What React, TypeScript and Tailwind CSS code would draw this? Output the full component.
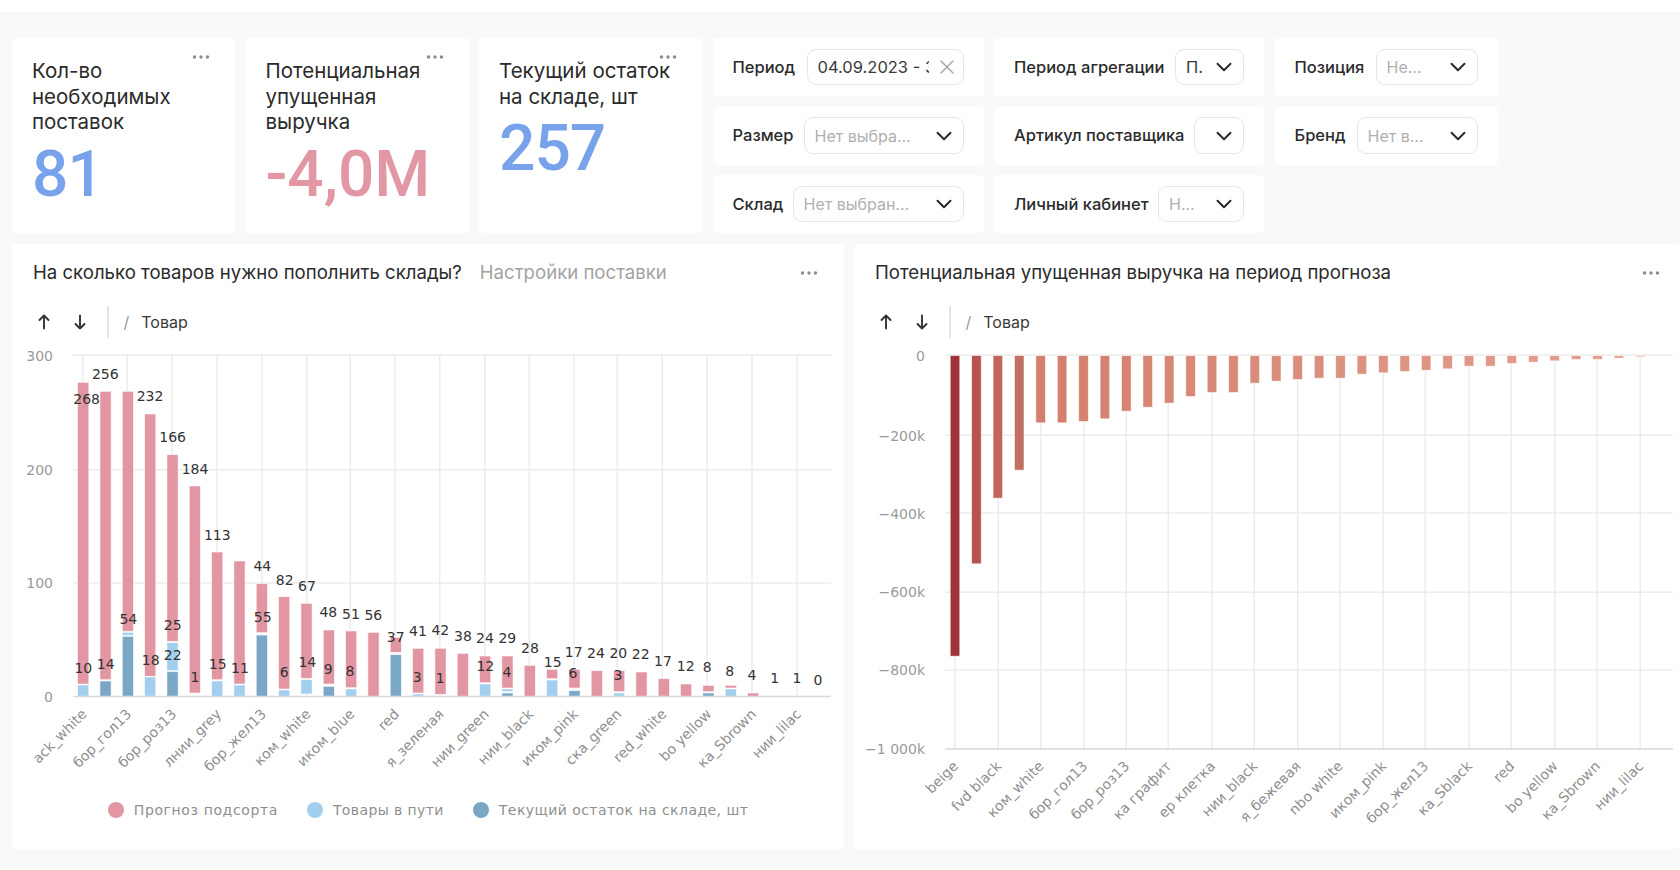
import React from "react";
import { ChevronDown, X } from "lucide-react";

const PINK = "#e295a2";
const LIGHT = "#a3cfee";
const DARK = "#7ba7c7";

// [colour, top, bottom] measured against a baseline, in thirds of a pixel
type Seg = [string, number, number];
const P = PINK, L = LIGHT, D = DARK;
const leftA: Seg[][] = [
  [[P, 130, 1035], [L, 1038, 1072]],
  [[P, 157, 1022], [D, 1026, 1072]],
  [[P, 157, 877], [L, 880, 889], [D, 892, 1072]],
  [[P, 225, 1012], [L, 1014, 1072]],
  [[P, 347, 907], [L, 911, 995], [D, 998, 1072]],
  [[P, 441, 1062]],
  [[P, 639, 1022], [L, 1026, 1072]],
  [[P, 666, 1035], [L, 1038, 1072]],
  [[P, 734, 881], [D, 888, 1072]],
  [[P, 773, 1050], [L, 1053, 1072]],
  [[P, 793, 1018], [L, 1022, 1065]],
  [[P, 873, 1035], [D, 1042, 1072]],
  [[P, 876, 1046], [L, 1050, 1072]],
  [[P, 880, 1072]],
  [[P, 895, 940], [D, 947, 1072]],
  [[P, 928, 1062], [L, 1065, 1072]],
  [[P, 928, 1066]],
];
const leftB: Seg[][] = [
  [[P, 463, 592]],
  [[P, 471, 551], [L, 555, 592]],
  [[P, 471, 567], [L, 570, 578], [D, 582, 592]],
  [[P, 499, 592]],
  [[P, 511, 539], [L, 543, 592]],
  [[P, 511, 567], [D, 575, 592]],
  [[P, 515, 592]],
  [[P, 515, 578], [L, 582, 592]],
  [[P, 519, 592]],
  [[P, 539, 592]],
  [[P, 555, 592]],
  [[P, 559, 578], [D, 582, 592]],
  [[P, 559, 567], [L, 570, 592]],
  [[P, 582, 592]],
];
const leftBars: Seg[][] = [
  ...leftA,
  ...leftB.map((b) => b.map(([c, t, e]) => [c, t + 480, e + 480] as Seg)),
];

const leftLabels: [string, number, number][] = [
  ["268", 260, 178], ["256", 316, 103], ["232", 450, 170], ["166", 518, 292], ["184", 585, 388],
  ["113", 652, 585], ["44", 787, 680], ["82", 854, 720], ["67", 921, 738], ["48", 985, 818],
  ["51", 1053, 822], ["56", 1120, 825], ["37", 1187, 893], ["41", 1254, 873], ["42", 1321, 872],
  ["10", 250, 984], ["14", 317, 972], ["54", 385, 837], ["18", 452, 960], ["25", 518, 857],
  ["22", 518, 945], ["1", 585, 1012], ["15", 653, 972], ["11", 720, 984], ["55", 788, 833],
  ["6", 853, 998], ["14", 922, 968], ["9", 985, 988], ["8", 1050, 995], ["3", 1252, 1012],
  ["1", 1321, 1016],
];
const leftLabelsB: [string, number, number][] = [
  ["38", 129, 408], ["24", 195, 416], ["29", 262, 416], ["28", 330, 444], ["15", 398, 488],
  ["17", 461, 456], ["24", 528, 460], ["20", 595, 460], ["22", 662, 464], ["17", 729, 484],
  ["12", 797, 500], ["8", 862, 503], ["8", 929, 515], ["4", 996, 527], ["1", 1064, 535],
  ["1", 1131, 535], ["0", 1194, 540], ["12", 196, 500], ["4", 261, 516], ["6", 459, 520],
  ["3", 594, 527],
];

const leftCats = ["ack_white", "бор_гол13", "бор_роз13", "лнии_grey", "бор_жел13", "ком_white", "иком_blue", "red", "я_зеленая", "нии_green", "нии_black", "иком_pink", "ска_green", "red_white", "bo yellow", "ка_Sbrown", "нии_lilac"];
const rightCats = ["beige", "fvd black", "ком_white", "бор_гол13", "бор_роз13", "ка графит", "ер клетка", "нии_black", "я_бежевая", "nbo white", "иком_pink", "бор_жел13", "ка_Sblack", "red", "bo yellow", "ка_Sbrown", "нии_lilac"];

const leftGrid = [82.7, 127.3, 172.3, 217, 262, 306.7, 350.3, 395, 439.7, 484.7, 529.3, 574, 617.3, 662.3, 707.3, 752, 797];
const rightGrid = [955, 998.3, 1040.7, 1084.3, 1126.3, 1168.3, 1212, 1254.3, 1297.7, 1339.7, 1383.3, 1425.3, 1469, 1511.3, 1554.7, 1597, 1640.3];

const rightBottoms = [952, 675, 478, 394, 252, 252, 248, 240, 217, 205, 193, 173, 161, 161, 133, 127, 122, 118, 118, 106, 102, 98, 94, 90, 82, 82, 74, 70, 66, 62, 62, 58, 54];
const rightColors = ["#9e3339", "#b6524f", "#c2665c", "#c37064"];
function rightColor(i: number) {
  if (i < 4) return rightColors[i];
  const t = (i - 4) / 28;
  const r = Math.round(0xd2 + (0xe4 - 0xd2) * t);
  const g = Math.round(0x7f + (0xa2 - 0x7f) * t);
  const b = Math.round(0x6e + (0x90 - 0x6e) * t);
  return `rgb(${r},${g},${b})`;
}

const chartText = "font-['DejaVu_Sans',sans-serif] text-[14px]";

function LeftChart() {
  return (
    <svg width="832" height="448" viewBox="12 344 832 448" className="block shrink-0 mt-[1px]">
      {[356, 470.7, 584].map((y) => (
        <line key={y} x1={73} x2={831} y1={y} y2={y} stroke="#ececec" strokeWidth={1.5} />
      ))}
      {leftGrid.map((x) => (
        <line key={x} x1={x} x2={x} y1={356} y2={697} stroke="#ececec" strokeWidth={1.5} />
      ))}
      {leftBars.map((segs, i) => {
        const x = 83.2 + i * 22.33;
        return segs.map(([c, t, e], j) => (
          <rect key={`${i}-${j}`} x={x - 5.6} y={340 + t / 3} width={11.2} height={(e - t) / 3} fill={c} stroke="#fff" strokeOpacity={0.7} strokeWidth={0.8} />
        ));
      })}
      <line x1={73} x2={831} y1={697.5} y2={697.5} stroke="#d9d9d9" strokeWidth={1.5} />
      {[["300", 357], ["200", 471], ["100", 584], ["0", 697.5]].map(([t, y]) => (
        <text key={t} x={53} y={Number(y) + 5} textAnchor="end" fill="#9a9a9a" className={chartText}>{t}</text>
      ))}
      {leftLabels.map(([t, x, y], i) => (
        <text key={i} x={x / 3} y={340 + y / 3 + 5.5} textAnchor="middle" fill="#333" className={chartText}>{t}</text>
      ))}
      {leftLabelsB.map(([t, x, y], i) => (
        <text key={i} x={420 + x / 3} y={500 + y / 3 + 5.5} textAnchor="middle" fill="#333" className={chartText}>{t}</text>
      ))}
      {leftCats.map((t, i) => {
        const x = leftGrid[i] + 5;
        const y = 716;
        return (
          <text key={t} x={x} y={y} textAnchor="end" fill="#8f8f8f" transform={`rotate(-45 ${x} ${y})`} className={chartText}>{t}</text>
        );
      })}
    </svg>
  );
}

function RightChart() {
  return (
    <svg width="826" height="505" viewBox="854 344 826 505" className="block shrink-0 mt-[1px]">
      {[436.3, 514, 593.3, 671].map((y) => (
        <line key={y} x1={945} x2={1673} y1={y} y2={y} stroke="#ececec" strokeWidth={1.5} />
      ))}
      {rightGrid.map((x) => (
        <line key={x} x1={x} x2={x} y1={356} y2={750} stroke="#ececec" strokeWidth={1.5} />
      ))}
      <line x1={945} x2={1673} y1={356} y2={356} stroke="#e4e4e4" strokeWidth={1} />
      {rightBottoms.map((b, i) => {
        const x = 955 + i * 21.416;
        return (
          <rect key={i} x={x - 4.8} y={356.5} width={9.6} height={(b - 50) / 3} fill={rightColor(i)} stroke="#fff" strokeOpacity={0.7} strokeWidth={0.8} />
        );
      })}
      <line x1={945} x2={1673} y1={750} y2={750} stroke="#d9d9d9" strokeWidth={1.5} />
      {[["0", 357], ["−200k", 436.5], ["−400k", 514.5], ["−600k", 593], ["−800k", 671], ["−1 000k", 749.5]].map(([t, y]) => (
        <text key={t} x={925} y={Number(y) + 5} textAnchor="end" fill="#9a9a9a" className={chartText}>{t}</text>
      ))}
      {rightCats.map((t, i) => {
        const x = rightGrid[i] + 4;
        const y = 768;
        return (
          <text key={t} x={x} y={y} textAnchor="end" fill="#8f8f8f" transform={`rotate(-45 ${x} ${y})`} className={chartText}>{t}</text>
        );
      })}
    </svg>
  );
}

function Dots({ className }: { className: string }) {
  return (
    <svg width="18" height="4" viewBox="0 0 18 4" className={className}>
      <circle cx="2.5" cy="2" r="1.7" fill="#8c8c8c" />
      <circle cx="9" cy="2" r="1.7" fill="#8c8c8c" />
      <circle cx="15.5" cy="2" r="1.7" fill="#8c8c8c" />
    </svg>
  );
}

function Arrow({ down, className }: { down?: boolean; className?: string }) {
  return (
    <svg width="12" height="16" viewBox="0 0 12 16" className={className} fill="none" stroke="#333" strokeWidth="1.9" strokeLinecap="round" strokeLinejoin="round">
      {down ? <path d="M6 1.5V14.5M1.5 10L6 14.5L10.5 10" /> : <path d="M6 14.5V1.5M1.5 6L6 1.5L10.5 6" />}
    </svg>
  );
}

function Kpi({ title, value, color }: { title: React.ReactNode; value: string; color: string }) {
  return (
    <div className="relative w-[223px] h-[195px] bg-white rounded-[4px] pt-[20px] pl-[20px] shrink-0">
      <Dots className="absolute right-[25px] top-[17px]" />
      <div className="font-['Inter',sans-serif] text-[20.5px] leading-[25.5px] text-[#2b2b2b] whitespace-nowrap">{title}</div>
      <div className={`font-['Roboto',sans-serif] text-[64px] leading-[80px] font-medium ${color}`}>{value}</div>
    </div>
  );
}

function Field({ label, width, value, placeholder, clear }: { label: string; width: string; value?: string; placeholder?: string; clear?: boolean }) {
  return (
    <div className="h-[58px] bg-white rounded-[4px] px-[20px] flex items-center justify-between">
      <span className="text-[16.5px] font-medium text-[#2b2b2b] whitespace-nowrap">{label}</span>
      <div className={`${width} h-[36.5px] border border-[#e6e6e6] rounded-[9px] flex items-center justify-end relative shrink-0 ${clear ? "pr-[4px]" : "pr-[6px]"}`}>
        {value && <span className="absolute left-[10px] right-[34px] overflow-hidden whitespace-nowrap text-[16.5px] text-[#3a3a3a]">{value}</span>}
        {placeholder && <span className="absolute left-[10px] whitespace-nowrap text-[16px] text-[#b0b0b0]">{placeholder}</span>}
        {clear ? <X size={24} strokeWidth={1.5} className="text-[#a8a8a8]" /> : <ChevronDown size={26} strokeWidth={1.85} className="text-[#2b2b2b]" />}
      </div>
    </div>
  );
}

function Toolbar() {
  return (
    <div className="h-[41px] flex items-center pl-[26px] shrink-0">
      <Arrow />
      <Arrow down className="ml-[24px]" />
      <div className="w-[1.5px] h-[32px] bg-[#e4e4e4] ml-[21px]" />
      <span className="ml-[15px] text-[16px] text-[#999]">/</span>
      <span className="ml-[12px] text-[16px] text-[#3a3a3a]">Товар</span>
    </div>
  );
}

function Legend({ color, text, tracking }: { color: string; text: string; tracking: string }) {
  return (
    <div className="flex items-center gap-[10px]">
      <span className={`w-[16px] h-[16px] rounded-full ${color}`} />
      <span className={`${chartText} text-[#8f8f8f] ${tracking}`}>{text}</span>
    </div>
  );
}

export default function App() {
  return (
    <div className="w-[1680px] h-[870px] overflow-hidden bg-[#f9f9f9] font-['Inter',sans-serif]">
      <div className="h-[12px] bg-white" />
      <div className="pt-[26px] pl-[12px] flex gap-[10.5px] h-[221px]">
        <Kpi title={<>Кол-во<br />необходимых<br />поставок</>} value="81" color="text-[#78a2ea] tracking-[-1px]" />
        <Kpi title={<>Потенциальная<br />упущенная<br />выручка</>} value="-4,0M" color="text-[#e297a4]" />
        <Kpi title={<>Текущий остаток<br />на складе, шт</>} value="257" color="text-[#78a2ea] tracking-[-1px]" />
        <div className="w-[271px] flex flex-col gap-[10.5px] shrink-0">
          <Field label="Период" width="w-[157px]" value="04.09.2023 - 31.12.2023" clear />
          <Field label="Размер" width="w-[160px]" placeholder="Нет выбра..." />
          <Field label="Склад" width="w-[171px]" placeholder="Нет выбран..." />
        </div>
        <div className="w-[270px] flex flex-col gap-[10.5px] shrink-0">
          <Field label="Период агрегации" width="w-[69px]" value="П." />
          <Field label="Артикул поставщика" width="w-[50px]" />
          <Field label="Личный кабинет" width="w-[86px]" placeholder="Н..." />
        </div>
        <div className="w-[223px] flex flex-col gap-[10.5px] shrink-0">
          <Field label="Позиция" width="w-[102px]" placeholder="Не..." />
          <Field label="Бренд" width="w-[121px]" placeholder="Нет в..." />
        </div>
      </div>
      <div className="mt-[11px] pl-[12px] flex gap-[10px]">
        <div className="relative w-[832px] h-[605px] bg-white rounded-[4px] flex flex-col">
          <div className="h-[57px] flex items-center pl-[21px] shrink-0 text-[18.6px] whitespace-nowrap">
            <span className="text-[#2b2b2b]">На сколько товаров нужно пополнить склады?</span>
            <span className="ml-[18px] text-[#a3a3a3]">Настройки поставки</span>
          </div>
          <Dots className="absolute right-[26px] top-[27px]" />
          <Toolbar />
          <LeftChart />
          <div className="h-[38px] flex items-center justify-center gap-[29px]">
            <Legend color="bg-[#e295a2]" text="Прогноз подсорта" tracking="tracking-[0.62px]" />
            <Legend color="bg-[#a3cfee]" text="Товары в пути" tracking="tracking-[0.4px]" />
            <Legend color="bg-[#7ba7c7]" text="Текущий остаток на складе, шт" tracking="tracking-[0.45px]" />
          </div>
        </div>
        <div className="relative flex-1 h-[605px] bg-white rounded-[4px] flex flex-col">
          <div className="h-[57px] flex items-center pl-[21px] shrink-0 text-[18.6px] text-[#2b2b2b] whitespace-nowrap">
            Потенциальная упущенная выручка на период прогноза
          </div>
          <Dots className="absolute right-[20px] top-[27px]" />
          <Toolbar />
          <RightChart />
        </div>
      </div>
    </div>
  );
}
